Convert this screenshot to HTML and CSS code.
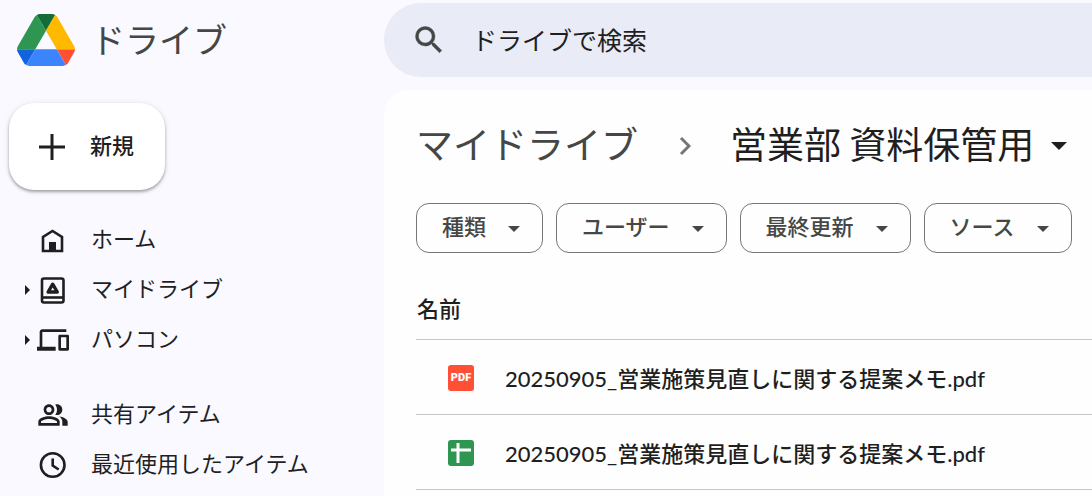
FILE: index.html
```html
<!DOCTYPE html>
<html lang="ja">
<head>
  <meta charset="UTF-8" />
  <meta name="viewport" content="width=device-width, initial-scale=1.0"/>
  <title>営業部 資料保管用 - ドライブ</title>
  <link rel="stylesheet" href="styles.css">
</head>
<body>
  <aside class="sidebar">
    <a class="brand" href="#">
      <svg class="logo" viewBox="0 0 87.3 78" aria-hidden="true">
        <path fill="#1264dd" d="m6.6 66.85 3.85 6.65c.8 1.4 1.95 2.5 3.3 3.3l13.75-23.8h-27.5c0 1.55.4 3.1 1.2 4.5z"/>
        <path fill="#2f9651" d="m43.65 25-13.75-23.8c-1.35.8-2.5 1.9-3.3 3.3l-25.4 44a9.06 9.06 0 0 0-1.2 4.5h27.5z"/>
        <path fill="#ff5035" d="m73.55 76.8c1.35-.8 2.5-1.9 3.3-3.3l1.6-2.75 7.65-13.25c.8-1.4 1.2-2.95 1.2-4.5h-27.5z"/>
        <path fill="#146c37" d="m43.65 25 13.75-23.8c-1.35-.8-2.9-1.2-4.5-1.2h-18.5c-1.6 0-3.15.45-4.5 1.2z"/>
        <path fill="#3c84fc" d="m59.8 53h-32.3l-13.75 23.8c1.35.8 2.9 1.2 4.5 1.2h50.8c1.6 0 3.15-.45 4.5-1.2z"/>
        <path fill="#ffba00" d="m73.4 26.5-12.7-22c-.8-1.4-1.95-2.5-3.3-3.3l-13.75 23.8 16.15 28h27.45c0-1.55-.4-3.1-1.2-4.5z"/>
      </svg>
      <span>ドライブ</span>
    </a>

    <button class="new-button" type="button">
      <svg class="plus" viewBox="0 0 26 26" aria-hidden="true"><path d="M13 0v26M0 13h26"/></svg>
      <span>新規</span>
    </button>

    <nav>
      <ul class="nav-group">
        <li><a href="#">
          <svg class="nav-icon" viewBox="0 0 32 32" aria-hidden="true">
            <path class="line" d="M6 27V13l9.5-6L25 13v14z"/>
            <path d="M12 18h7v9h-7z"/>
          </svg>
          <span>ホーム</span>
        </a></li>
        <li><a class="expandable" href="#">
          <svg class="nav-icon" viewBox="0 0 32 32" aria-hidden="true">
            <rect class="line" x="5" y="4.5" width="21.5" height="24" rx="2"/>
            <path class="line" d="M5 23.5h21.5"/>
            <path class="tri" d="M15.7 10.2l-4.6 7.8h9.2z"/>
          </svg>
          <span>マイドライブ</span>
        </a></li>
        <li><a class="expandable" href="#">
          <svg class="nav-icon" viewBox="0 0 24 24" aria-hidden="true">
            <path d="M4 6h18V4H4c-1.1 0-2 .9-2 2v11H0v3h14v-3H4V6zm19 2h-6c-.55 0-1 .45-1 1v10c0 .55.45 1 1 1h6c.55 0 1-.45 1-1V9c0-.55-.45-1-1-1zm-1 10h-4v-8h4v8z"/>
          </svg>
          <span>パソコン</span>
        </a></li>
      </ul>
      <ul class="nav-group">
        <li><a href="#">
          <svg class="nav-icon" viewBox="0 0 24 24" aria-hidden="true">
            <path d="M16.67 13.13C18.04 14.06 19 15.32 19 17v3h4v-3c0-2.18-3.57-3.47-6.33-3.87zM15 12c2.21 0 4-1.79 4-4s-1.79-4-4-4c-.47 0-.91.1-1.33.24C14.5 5.27 15 6.58 15 8s-.5 2.73-1.33 3.76c.42.14.86.24 1.33.24zM9 12c2.21 0 4-1.79 4-4s-1.79-4-4-4-4 1.79-4 4 1.79 4 4 4zm0-6c1.1 0 2 .9 2 2s-.9 2-2 2-2-.9-2-2 .9-2 2-2zm0 7c-2.67 0-8 1.34-8 4v3h16v-3c0-2.66-5.33-4-8-4zm6 5H3v-.99C3.2 16.29 6.3 15 9 15s5.8 1.29 6 2v1z"/>
          </svg>
          <span>共有アイテム</span>
        </a></li>
        <li><a href="#">
          <svg class="nav-icon" viewBox="0 0 32 32" aria-hidden="true">
            <circle class="line" cx="15.7" cy="16" r="11.8"/>
            <path class="line" d="M15.7 9.5v7l6 4"/>
          </svg>
          <span>最近使用したアイテム</span>
        </a></li>
      </ul>
    </nav>
  </aside>

  <div class="content">
    <form class="search" role="search">
      <svg class="search-icon" viewBox="0 0 24 24" aria-hidden="true">
        <path d="M15.5 14h-.79l-.28-.27A6.47 6.47 0 0 0 16 9.5 6.5 6.5 0 1 0 9.5 16c1.61 0 3.09-.59 4.23-1.57l.27.28v.79l5 4.99L20.49 19l-4.99-5zm-6 0C7.01 14 5 11.99 5 9.5S7.01 5 9.5 5 14 7.01 14 9.5 11.99 14 9.5 14z"/>
      </svg>
      <input type="search" name="q" placeholder="ドライブで検索" aria-label="ドライブで検索">
    </form>

    <main class="panel">
      <div class="breadcrumb">
        <a href="#">マイドライブ</a>
        <svg class="chevron" viewBox="0 0 12 20" aria-hidden="true"><path d="M2 2l8 8-8 8"/></svg>
        <button class="folder" type="button"><span>営業部 資料保管用</span></button>
      </div>

      <div class="filters">
        <button type="button"><span>種類</span></button>
        <button type="button"><span>ユーザー</span></button>
        <button type="button"><span>最終更新</span></button>
        <button type="button"><span>ソース</span></button>
      </div>

      <table class="files">
        <thead>
          <tr><th scope="col">名前</th></tr>
        </thead>
        <tbody>
          <tr>
            <td>
              <div class="file">
                <span class="file-icon pdf">PDF</span>
                <a href="#">20250905_営業施策見直しに関する提案メモ.pdf</a>
              </div>
            </td>
          </tr>
          <tr>
            <td>
              <div class="file">
                <svg class="file-icon sheet" viewBox="0 0 26 26" aria-hidden="true"><path d="M10 3v20M3 10h20"/></svg>
                <a href="#">20250905_営業施策見直しに関する提案メモ.pdf</a>
              </div>
            </td>
          </tr>
        </tbody>
      </table>
    </main>
  </div>
</body>
</html>
```
FILE: styles.css
```css
* {
  box-sizing: border-box;
}

body {
  margin: 0;
  display: flex;
  min-height: 100vh;
  background-color: #f9f9ff;
  color: #1f1f1f;
  font-family: "Noto Sans CJK JP", sans-serif;
  font-size: 22px;
  line-height: 32px;
}

a {
  color: inherit;
  text-decoration: none;
}

button {
  color: inherit;
  font: inherit;
  cursor: pointer;
}

/* sidebar */
.sidebar {
  flex: 0 0 384px;
}

.brand {
  display: flex;
  align-items: center;
  gap: 16px;
  height: 80px;
  padding-left: 17px;
  color: #444746;
  font-size: 34px;
}

.brand span {
  padding-bottom: 2px;
}

.logo {
  width: 58px;
  height: 52px;
}

.new-button {
  display: flex;
  align-items: center;
  gap: 25px;
  height: 87px;
  margin: 23px 0 24px 9px;
  padding: 0 31px 0 30px;
  border: none;
  border-radius: 25px;
  background-color: #fff;
  box-shadow: 0 2px 3px rgba(0,0,0,0.3), 0 1px 6px rgba(0,0,0,0.1);
  font-weight: 500;
}

.new-button span {
  padding-bottom: 6px;
}

.plus {
  width: 26px;
  height: 26px;
  fill: none;
  stroke: #1f1f1f;
  stroke-width: 3;
}

.nav-group {
  margin: 0 0 25px;
  padding: 0;
  list-style: none;
}

.nav-group a {
  display: flex;
  align-items: center;
  gap: 22px;
  height: 50px;
  padding: 2px 0 0 37px;
}

.nav-group span {
  padding-bottom: 6px;
}

.nav-group .expandable {
  padding-left: 25px;
}

.expandable::before {
  content: "";
  margin-right: -15px;
  border: 5px solid transparent;
  border-left-color: #1f1f1f;
  border-right-width: 0;
}

.nav-icon {
  width: 32px;
  height: 32px;
  fill: #1f1f1f;
}

.nav-icon .line,
.nav-icon .tri {
  fill: none;
  stroke: #1f1f1f;
  stroke-width: 2.6;
}

.nav-icon .tri {
  stroke-width: 3.4;
  stroke-linejoin: round;
}

/* search */
.content {
  flex: 1;
  min-width: 0;
  display: flex;
  flex-direction: column;
}

.search {
  display: flex;
  align-items: center;
  gap: 25px;
  height: 74px;
  margin: 3px 0 13px;
  padding-left: 27px;
  border-radius: 37px 0 0 37px;
  background-color: #e9ebf6;
}

.search-icon {
  flex: none;
  width: 36px;
  height: 36px;
  fill: #444746;
  stroke: #444746;
  stroke-width: 0.3;
}

.search input {
  flex: 1;
  min-width: 0;
  padding: 0 0 2px;
  border: none;
  outline: none;
  background: none;
  font: inherit;
  font-size: 25px;
}

.search input::placeholder {
  color: #1f1f1f;
  opacity: 1;
}

/* folder */
.panel {
  flex: 1;
  padding: 24px 0 0 32px;
  border-top-left-radius: 24px;
  background-color: #fefefe;
}

.breadcrumb {
  display: flex;
  align-items: center;
  height: 62px;
  color: #444746;
  font-size: 37px;
  line-height: 56px;
  white-space: nowrap;
}

.breadcrumb a,
.breadcrumb span {
  padding-bottom: 4px;
}

.chevron {
  width: 12px;
  height: 20px;
  margin: 2px 39px 0 41px;
  fill: none;
  stroke: #757575;
  stroke-width: 3;
}

.folder {
  display: flex;
  align-items: center;
  gap: 17px;
  padding: 0;
  border: none;
  background: none;
  color: #1f1f1f;
}

.folder::after,
.filters button::after {
  content: "";
  margin-top: 2px;
  border: 6px solid transparent;
  border-top-color: currentColor;
  border-bottom-width: 0;
}

.folder::after {
  border-width: 8px 8px 0;
}

.filters {
  display: flex;
  gap: 13px;
  margin-top: 27px;
}

.filters button {
  display: flex;
  align-items: center;
  gap: 22px;
  height: 50px;
  padding: 0 22px 0 25px;
  border: 1px solid #747775;
  border-radius: 13px;
  background: none;
  color: #444746;
  font-weight: 500;
  white-space: nowrap;
}

.filters span {
  padding-bottom: 6px;
}

.files {
  width: 100%;
  margin-top: 26px;
  border-collapse: collapse;
}

.files th {
  height: 60px;
  padding: 0 0 4px 1px;
  border-bottom: 1px solid #c7c7c7;
  font-weight: 500;
  text-align: left;
}

.files td {
  height: 75px;
  padding: 2px 0 0 32px;
  border-bottom: 1px solid #c7c7c7;
}

.file {
  display: flex;
  align-items: center;
  gap: 31px;
  font-family: Lato, "Noto Sans CJK JP", sans-serif;
  font-weight: 500;
  white-space: nowrap;
}

.file a {
  padding-top: 2px;
}

.file-icon {
  flex: none;
  width: 26px;
  height: 26px;
  border-radius: 3px;
}

.pdf {
  background-color: #ff5035;
  color: #fff;
  font-family: Roboto, sans-serif;
  font-size: 11px;
  font-weight: 900;
  line-height: 26px;
  text-align: center;
}

.sheet {
  background-color: #2f9651;
  fill: none;
  stroke: #fff;
  stroke-width: 3;
}
```
